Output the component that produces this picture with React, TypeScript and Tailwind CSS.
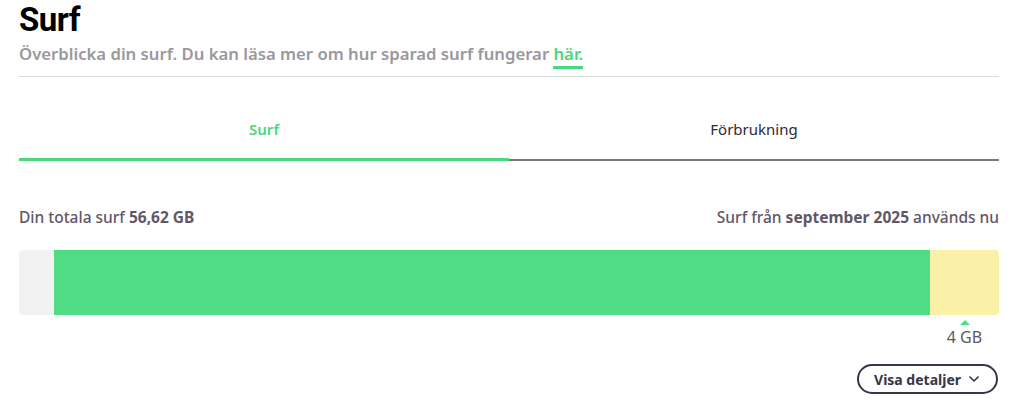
import { ChevronDown } from "lucide-react";

const font = { fontFamily: '"Noto Sans", "Liberation Sans", sans-serif' };

const SurfOverview = () => {
  return (
    <div className="bg-white w-[1027px] h-[415px] overflow-hidden" style={font}>
      <div className="ml-[19px] w-[980px]">
        <h1
          className="text-[33px] leading-[36px] font-bold text-black pt-[2px] tracking-[-0.5px]"
          style={{ fontFamily: "Roboto, sans-serif" }}
        >
          Surf
        </h1>
        <p className="mt-[5px] text-[16.7px] leading-[22px] font-semibold text-[#9b979e]">
          Överblicka din surf. Du kan läsa mer om hur sparad surf fungerar{" "}
          <a href="#" className="text-[#4cd67e] border-b-[3px] border-[#4cd67e] pb-[1px]">
            här.
          </a>
        </p>
        <div className="mt-[11px] h-px bg-[#dcdcdc]" />

        {/* tabs */}
        <div className="flex mt-[41px]">
          <button className="flex-1 flex flex-col items-center">
            <span className="text-[15px] leading-[22px] font-semibold text-[#4cd67e]">Surf</span>
            <span className="mt-[18px] h-[3px] w-full bg-[#4cd67e]" />
          </button>
          <button className="flex-1 flex flex-col items-center">
            <span className="text-[15px] leading-[22px] text-[#2e2a35]">Förbrukning</span>
            <span className="mt-[19px] h-[2px] w-full bg-[#7a7a7a]" />
          </button>
        </div>

        <div className="mt-[46px] flex justify-between text-[15.5px] leading-[20px] text-[#5f5866] font-medium">
          <span>
            Din totala surf <b className="font-bold">56,62 GB</b>
          </span>
          <span>
            Surf från <b className="font-bold">september 2025</b> används nu
          </span>
        </div>

        {/* usage bar */}
        <div className="mt-[23px] h-[65px] flex rounded-[4px] overflow-hidden">
          <div className="w-[35px] bg-[#f2f2f2]" />
          <div className="flex-1 bg-[#50dc84]" />
          <div className="w-[69px] bg-[#fbf0a8]" />
        </div>
        <div className="flex justify-end">
          <div className="w-[69px] flex flex-col items-center">
            <span className="mt-[5px] w-0 h-0 border-x-[5px] border-x-transparent border-b-[5px] border-b-[#50dc84]" />
            <span className="mt-[3px] text-[16px] leading-[18px] text-[#5f5866]">4 GB</span>
          </div>
        </div>

        <div className="flex justify-end mt-[18px]">
          <button className="h-[30px] pl-[15px] pr-[14px] mr-px rounded-full border-2 border-[#3a3546] flex items-center gap-[5px] text-[14px] font-bold text-[#3a3546]">
            Visa detaljer
            <ChevronDown size={16} strokeWidth={2.5} />
          </button>
        </div>
      </div>
    </div>
  );
};

export default function App() {
  return <SurfOverview />;
}
